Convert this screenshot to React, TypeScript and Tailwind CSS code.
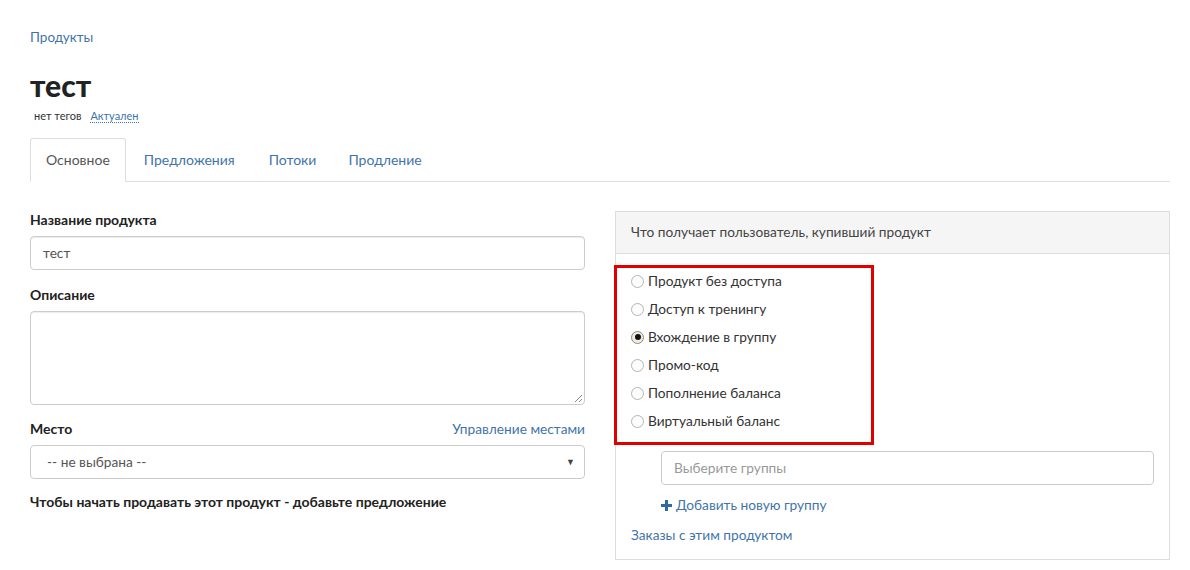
import React from 'react';

const options = [
  { label: 'Продукт без доступа', checked: false },
  { label: 'Доступ к тренингу', checked: false },
  { label: 'Вхождение в группу', checked: true },
  { label: 'Промо-код', checked: false },
  { label: 'Пополнение баланса', checked: false },
  { label: 'Виртуальный баланс', checked: false },
];

function Radio({ checked }: { checked: boolean }) {
  return (
    <span
      className={
        'flex h-[13px] w-[13px] shrink-0 items-center justify-center rounded-full border ' +
        (checked ? 'border-[#8a8a8a] bg-[#f3ecdc]' : 'border-[#b5b5b5] bg-[#fcfcfc]')
      }
    >
      {checked && <span className="h-[6px] w-[6px] rounded-full bg-[#111]" />}
    </span>
  );
}

export default function App() {
  return (
    <div className="min-h-[570px] bg-white font-['Lato','Liberation_Sans',sans-serif] text-[13.7px] text-[#333]">
      <div className="pl-[30px] pr-[20px] pt-[27px]">
        {/* Breadcrumb */}
        <a className="text-[13.5px] text-[#3f74aa]">Продукты</a>

        {/* Title */}
        <h1 className="mt-[19px] text-[30px] font-black leading-[36px] text-[#222]">тест</h1>
        <div className="mt-[5px] flex items-center gap-[9px] pl-[4px] text-[11px]">
          <span className="text-[#333]">нет тегов</span>
          <a className="border-b border-dotted border-[#3f74aa] leading-[13px] text-[#3f74aa]">Актуален</a>
        </div>

        {/* Tabs */}
        <div className="mt-[14px] flex border-b border-[#ddd]">
          <div className="-mb-px rounded-t-[3px] border border-[#ddd] border-b-white bg-white px-[15px] py-[10px] text-[14px] text-[#555]">
            Основное
          </div>
          <div className="px-[18px] py-[11px] text-[14px] text-[#3f74aa]">Предложения</div>
          <div className="px-[16px] py-[11px] text-[14px] text-[#3f74aa]">Потоки</div>
          <div className="px-[16px] py-[11px] text-[14px] text-[#3f74aa]">Продление</div>
        </div>

        <div className="mt-[29px] grid grid-cols-2 gap-[30px]">
          {/* Left column */}
          <div>
            <div className="text-[14px] font-bold leading-[18px] text-[#222]">Название продукта</div>
            <div className="mt-[7px] flex h-[34px] items-center rounded-[4px] border border-[#ccc] px-[12px] text-[13.7px] text-[#555] shadow-[inset_0_1px_1px_rgba(0,0,0,0.075)]">
              тест
            </div>

            <div className="mt-[16px] text-[14px] font-bold leading-[18px] text-[#222]">Описание</div>
            <div className="relative mt-[7px] h-[94px] rounded-[4px] border border-[#ccc] shadow-[inset_0_1px_1px_rgba(0,0,0,0.075)]">
              <svg className="absolute bottom-[1px] right-[1px]" width="9" height="9" viewBox="0 0 9 9">
                <path d="M8 1 1 8M8 5 5 8" stroke="#888" strokeWidth="1" />
              </svg>
            </div>

            <div className="mt-[15px] flex items-center justify-between leading-[18px]">
              <span className="text-[14px] font-bold text-[#222]">Место</span>
              <a className="text-[13.7px] text-[#3f74aa]">Управление местами</a>
            </div>
            <div className="mt-[7px] flex h-[34px] items-center justify-between rounded-[4px] border border-[#ccc] pl-[16px] pr-[9px] text-[13.7px] text-[#555]">
              <span>-- не выбрана --</span>
              <span className="text-[9px] text-[#444]">▼</span>
            </div>

            <div className="mt-[14px] text-[14px] font-bold leading-[18px] text-[#222]">
              Чтобы начать продавать этот продукт - добавьте предложение
            </div>
          </div>

          {/* Right column */}
          <div className="relative h-[349px] border border-[#ddd]">
            <div className="flex h-[42px] items-center border-b border-[#ddd] bg-[#f5f5f5] px-[15px] text-[13.7px] text-[#444]">
              Что получает пользователь, купивший продукт
            </div>
            <div className="px-[15px] pt-[13px]">
              <div className="flex flex-col">
                {options.map((o) => (
                  <label key={o.label} className="flex h-[28px] items-center gap-[4px] text-[13.7px] text-[#333]">
                    <Radio checked={o.checked} />
                    {o.label}
                  </label>
                ))}
              </div>
              <div className="mt-[16px] pl-[30px]">
                <div className="flex h-[34px] items-center rounded-[4px] border border-[#ccc] px-[12px] text-[13.7px] text-[#999]">
                  Выберите группы
                </div>
                <a className="mt-[10px] flex items-center gap-[4px] text-[13.7px] text-[#3f74aa]">
                  <svg width="11" height="11" viewBox="0 0 11 11">
                    <path d="M4 0h3v4h4v3H7v4H4V7H0V4h4z" fill="#2f6aa3" />
                  </svg>
                  Добавить новую группу
                </a>
              </div>
              <a className="mt-[9px] block text-[13.7px] text-[#3f74aa]">Заказы с этим продуктом</a>
            </div>

            {/* Annotation highlight */}
            <div className="pointer-events-none absolute left-[-2px] top-[53px] h-[180px] w-[260px] border-[3px] border-[#e00000]" />
          </div>
        </div>
      </div>
    </div>
  );
}
